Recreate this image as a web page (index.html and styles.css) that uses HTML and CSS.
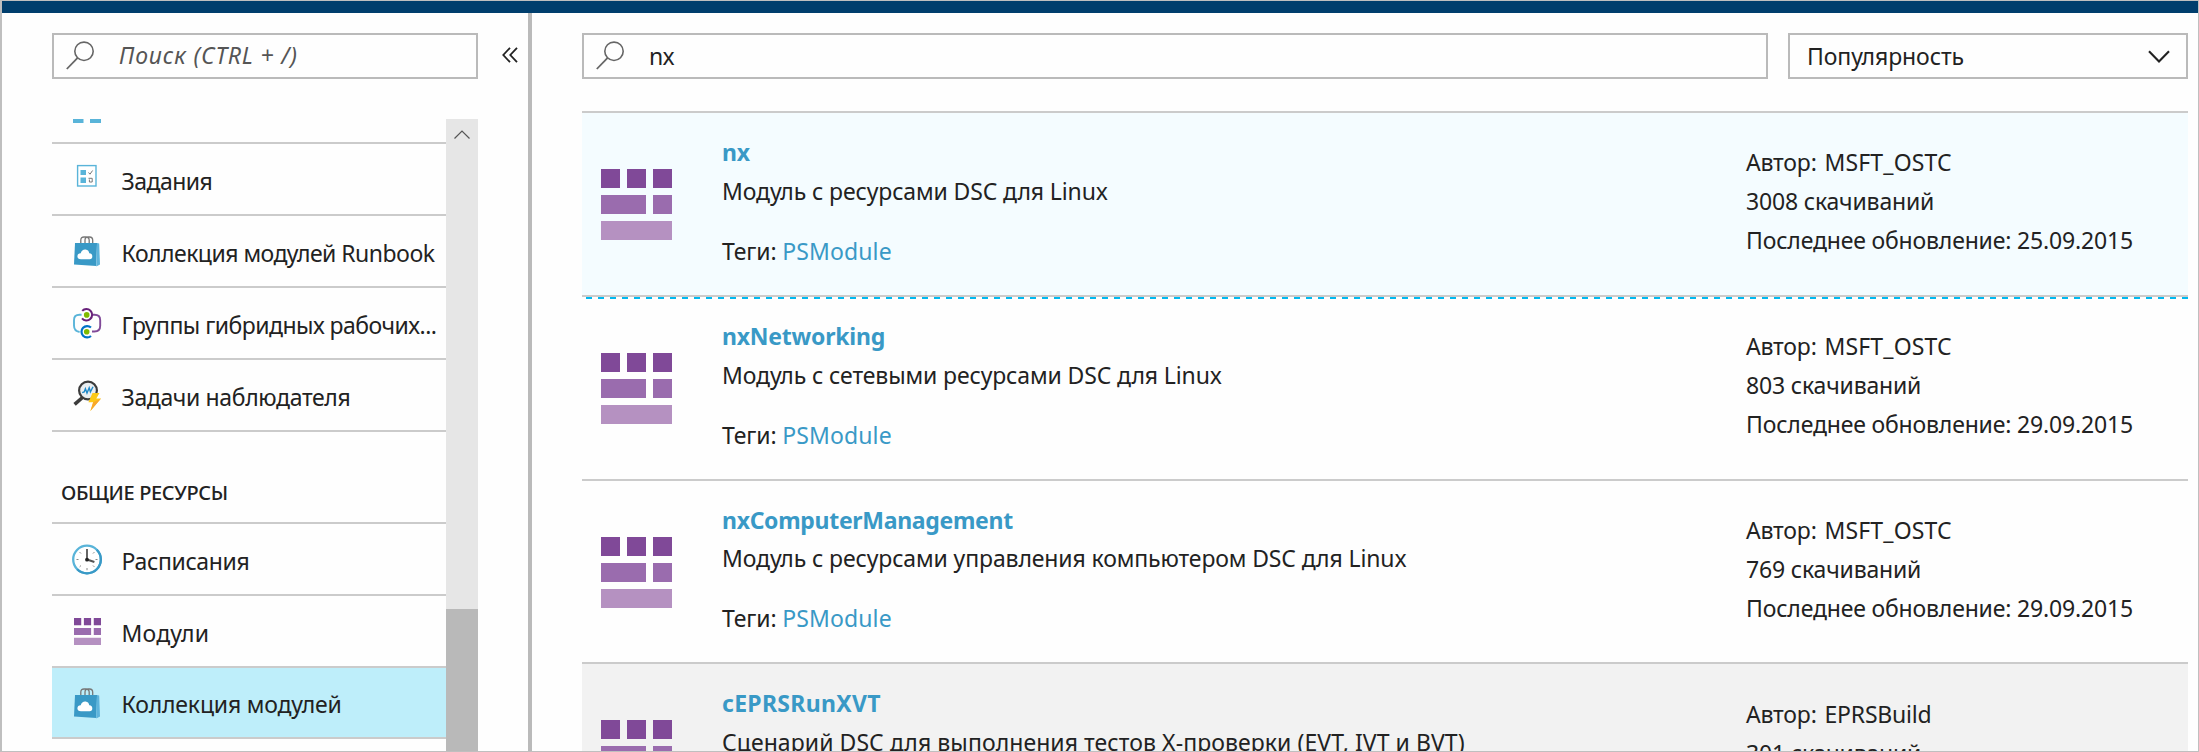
FILE: index.html
```
<!DOCTYPE html>
<html lang="ru">
<head>
<meta charset="utf-8">
<title>Коллекция модулей</title>
<link rel="stylesheet" href="styles.css">
</head>
<body>
<svg class="defs" width="0" height="0" aria-hidden="true">
  <symbol id="lens" viewBox="0 0 28 29">
    <circle cx="18" cy="10.3" r="9.2" fill="none" stroke="#666" stroke-width="1.6"/>
    <path d="M11.6 16.8 L0.8 28" fill="none" stroke="#666" stroke-width="1.8"/>
  </symbol>
  <symbol id="modules" viewBox="0 0 71 71">
    <path d="M0 0H19V19H0zM26 0H45V19H26zM52 0H71V19H52z" fill="#804998"/>
    <path d="M0 26H45V45H0zM52 26H71V45H52z" fill="#9a6cae"/>
    <path d="M0 52H71V71H0z" fill="#b591c1"/>
  </symbol>
  <symbol id="bag" viewBox="0 0 26 31">
    <path d="M6.8 8V4.2Q6.8 1 10 1H12Q15.2 1 15.2 4.2V8M11 8V4.2Q11 1 14 1H15.6Q18.7 1 18.7 4.2V8" fill="none" stroke="#777" stroke-width="1.3"/>
    <path d="M1 7H23L22.3 30L0 28.6z" fill="#3999c6"/>
    <path d="M23 7L25.2 7.4L26 28.4L22.3 30.4z" fill="#5eb4dc"/>
    <path d="M7 23.3Q3.4 23 3.4 20.2Q3.6 17.3 6.7 17.2Q8 13.2 11.7 13.6Q14.6 14 15.3 17.2Q18.4 17.4 18.3 20.5Q18.3 23.3 15.6 23.3z" fill="#fff"/>
  </symbol>
</svg>
<div class="window">
  <header class="topbar"></header>
  <div class="body">
    <aside class="sidebar">
      <div class="side-head">
        <div class="field"><svg class="lens"><use href="#lens"/></svg><span class="placeholder">Поиск (CTRL + /)</span></div>
        <svg class="collapse" viewBox="0 0 16 16"><path d="M8 .8L1.3 8L8 15.2M15 .8L8.3 8L15 15.2" fill="none" stroke="#222" stroke-width="1.8"/></svg>
      </div>
      <div class="side-list">
        <nav class="menu">
          <div class="item cut"><svg class="icon" viewBox="0 0 30 4"><path d="M1 0H11.5V4H1zM18 0H29V4H18z" fill="#59b4d9"/></svg></div>
          <div class="item"><svg class="icon jobs" viewBox="0 0 30 31">
            <rect x="5.6" y="4.6" width="18.4" height="20.4" fill="#fff" stroke="#59b4d9" stroke-width="1.4"/>
            <path d="M8.5 9H14V14H8.5zM8.5 16.5H14V22H8.5z" fill="#59b4d9"/>
            <path d="M16.5 11.5L18 13.2L20.6 9.5M16.5 17.3H20.2V21H17.4V18.5" fill="none" stroke="#777" stroke-width="1"/></svg><span class="t1">Задания</span></div>
          <div class="item"><svg class="icon bag"><use href="#bag"/></svg><span class="t1">Коллекция модулей Runbook</span></div>
          <div class="item"><svg class="icon" viewBox="0 0 30 31">
            <path d="M9.6 6.8H7.5Q2 6.8 2 12.2V17.5Q2 23 7.6 24" fill="none" stroke="#59b4d9" stroke-width="1.9"/>
            <path d="M20.2 6.8H22.5Q28.2 6.8 28.2 12.2V17.8Q28.2 23.5 22.5 23.5H20" fill="none" stroke="#804998" stroke-width="1.9"/>
            <path d="M10.2 2.9A5.7 5.7 0 1 1 10 10.3" fill="none" stroke="#68217a" stroke-width="2"/>
            <path d="M19 19.5A5.7 5.7 0 1 0 19 28" fill="none" stroke="#0072c6" stroke-width="2.2"/>
            <circle cx="14.7" cy="6.9" r="2.8" fill="#7fba00"/><circle cx="14.7" cy="23.7" r="2.8" fill="#7fba00"/></svg><span class="t1">Группы гибридных рабочих...</span></div>
          <div class="item"><svg class="icon" viewBox="0 0 30 31">
            <path d="M10.5 17.5L2.6 24.4" stroke="#3c3c3c" stroke-width="3.6"/>
            <circle cx="16" cy="10.5" r="8.9" fill="#e9eef1" stroke="#3c3c3c" stroke-width="2.2"/>
            <path d="M10.2 12.6L12.2 12L13.4 8.8L15 13L17.2 7.8L18.4 11.8L21 6.8" fill="none" stroke="#1e88c8" stroke-width="1.4"/>
            <path d="M20.5 13H27.5L24.3 18.5H29L18.4 31L21.2 22.3H16.4z" fill="#fcc917"/>
            <path d="M29 18.5L18.4 31L21.2 22.3z" fill="#f8a72b"/></svg><span class="t2">Задачи наблюдателя</span></div>
          <div class="section">ОБЩИЕ РЕСУРСЫ</div>
          <div class="item"><svg class="icon" viewBox="0 0 30 31">
            <circle cx="15" cy="15.5" r="13.8" fill="#fff" stroke="#59b4d9" stroke-width="2.3"/>
            <path d="M24.8 5.7A13.8 13.8 0 0 1 5.2 25.3" fill="none" stroke="#3999c6" stroke-width="2.3"/>
            <path d="M4.5 15.5H6.5M23.5 15.5H25.5M15 24V26.2M7.6 8.1L9 9.5M22.4 8.1L21 9.5M7.6 22.9L9 21.5M22.4 22.9L21 21.5" stroke="#888" stroke-width="1"/>
            <path d="M15 5V15.5" stroke="#555" stroke-width="1.8"/><path d="M15 15.5L22.4 18" stroke="#555" stroke-width="2"/>
            <circle cx="15" cy="15.7" r="1.9" fill="#222"/></svg><span class="t2">Расписания</span></div>
          <div class="item"><svg class="icon mods"><use href="#modules"/></svg><span class="t4">Модули</span></div>
          <div class="item selected"><svg class="icon bag"><use href="#bag"/></svg><span class="t3">Коллекция модулей</span></div>
        </nav>
        <div class="scroll"><svg class="up" viewBox="0 0 16 9"><path d="M.5 8.5L8 1L15.5 8.5" fill="none" stroke="#555" stroke-width="1.2"/></svg><div class="thumb"></div></div>
      </div>
    </aside>
    <main class="content">
      <div class="filters">
        <div class="field query"><svg class="lens"><use href="#lens"/></svg><span class="value">nx</span></div>
        <div class="field select"><span>Популярность</span><svg class="chev" viewBox="0 0 22 13"><path d="M1 1.2L11 11.5L21 1.2" fill="none" stroke="#222" stroke-width="2.1"/></svg></div>
      </div>
      <section class="results">
        <article class="row active">
          <svg class="big"><use href="#modules"/></svg>
          <div class="info"><h3>nx</h3><p>Модуль с ресурсами DSC для Linux</p><p class="tags">Теги: <a>PSModule</a></p></div>
          <div class="meta"><p>Автор: <span class="author">MSFT_OSTC</span></p><p>3008 скачиваний</p><p>Последнее обновление: 25.09.2015</p></div>
        </article>
        <article class="row">
          <svg class="big"><use href="#modules"/></svg>
          <div class="info"><h3>nxNetworking</h3><p>Модуль с сетевыми ресурсами DSC для Linux</p><p class="tags">Теги: <a>PSModule</a></p></div>
          <div class="meta"><p>Автор: <span class="author">MSFT_OSTC</span></p><p>803 скачиваний</p><p>Последнее обновление: 29.09.2015</p></div>
        </article>
        <article class="row">
          <svg class="big"><use href="#modules"/></svg>
          <div class="info"><h3 class="tight">nxComputerManagement</h3><p>Модуль с ресурсами управления компьютером DSC для Linux</p><p class="tags">Теги: <a>PSModule</a></p></div>
          <div class="meta"><p>Автор: <span class="author">MSFT_OSTC</span></p><p>769 скачиваний</p><p>Последнее обновление: 29.09.2015</p></div>
        </article>
        <article class="row muted">
          <svg class="big"><use href="#modules"/></svg>
          <div class="info"><h3 class="wide">cEPRSRunXVT</h3><p class="wide-p">Сценарий DSC для выполнения тестов X-проверки (EVT, IVT и BVT)</p></div>
          <div class="meta"><p>Автор: <span class="author-b">EPRSBuild</span></p><p>301 скачиваний</p></div>
        </article>
      </section>
    </main>
  </div>
</div>
</body>
</html>
```
FILE: styles.css
```
* { box-sizing: border-box; }
body { margin: 0; background: #fefefe; color: #222; font: 23px/39px "Noto Sans", "Open Sans", sans-serif; }
h3, p { margin: 0; font-size: inherit; white-space: nowrap; }
.defs { display: block; }
.window { width: 2199px; height: 752px; display: flex; flex-direction: column; overflow: hidden; border: 1px solid #bfbfbf; border-left-width: 2px; }
.topbar { height: 12px; flex: none; background: #003e6d; }
.body { flex: 1; min-height: 0; display: flex; }

.field { height: 46px; border: 2px solid #bababa; display: flex; align-items: center; background: #fefefe; }
.lens { width: 28px; height: 29px; margin: -2px 0 0 12px; flex: none; }

.sidebar { width: 530px; flex: none; border-right: 4px solid #bababa; padding: 20px 0 0 50px; display: flex; flex-direction: column; }
.side-head { display: flex; align-items: center; flex: none; }
.side-head .field { width: 426px; }
.placeholder { margin: -1px 0 0 25px; font-style: italic; letter-spacing: .85px; color: #555; }
.collapse { width: 16px; height: 16px; margin: -2px 0 0 24px; }
.side-list { margin-top: 40px; flex: 1; min-height: 0; width: 426px; display: flex; }
.menu { flex: 1; min-width: 0; overflow: hidden; }
.item { height: 72px; border-bottom: 2px solid #cbcbcb; display: flex; align-items: center; padding-left: 20px; white-space: nowrap; }
.item span { margin: 5px 0 0 19.5px; }
.icon { width: 30px; height: 31px; flex: none; margin-top: 1px; }
.icon.jobs { margin-top: -6px; }
.icon.bag { width: 26px; margin: 1px 2px 0 2px; }
.icon.mods { width: 27px; height: 27px; margin: 1px 1.5px 0 1.5px; }
.cut { height: 25px; align-items: flex-start; }
.cut .icon { height: 4px; margin-top: 0; }
.t1 { letter-spacing: -.52px; }
.t2 { letter-spacing: -.36px; }
.t3 { letter-spacing: -.18px; }
.t4 { letter-spacing: .2px; }
.section { height: 92px; border-bottom: 2px solid #cbcbcb; padding: 41px 0 0 9px; font-size: 20px; font-weight: 500; letter-spacing: -.35px; }
.selected { height: 71px; background: #beeefa; }
.selected span { margin-top: 4px; }
.scroll { width: 32px; flex: none; background: #e6e6e6; display: flex; flex-direction: column; justify-content: space-between; align-items: center; }
.up { width: 16px; height: 9px; margin-top: 11px; }
.thumb { width: 32px; height: 142px; background: #b9b9b9; }

.content { flex: 1; min-width: 0; padding: 20px 10px 0 50px; display: flex; flex-direction: column; }
.filters { display: flex; gap: 20px; flex: none; }
.query { flex: 1; }
.value { margin: 0 0 0 25px; letter-spacing: -.6px; }
.select { width: 400px; justify-content: space-between; padding: 0 16px 0 17px; letter-spacing: -.1px; }
.chev { width: 22px; height: 13px; }
.results { margin-top: 32px; flex: 1; min-height: 0; overflow: hidden; letter-spacing: -.12px; }
.row { height: 184px; border-top: 2px solid #cbcbcb; display: flex; position: relative; }
.row:nth-child(3) { height: 183px; }
.big { width: 71px; height: 71px; margin: 55.5px 0 0 18.5px; flex: none; }
.info { flex: 1; padding: 20px 0 0 50.5px; }
.info h3 { color: #3999c6; font-weight: 700; letter-spacing: -.22px; }
.info .tight { letter-spacing: -.3px; margin-bottom: -1px; }
.info .wide { letter-spacing: .3px; }
.info .wide-p { letter-spacing: .07px; }
.tags { margin-top: 21px; }
.tags a { color: #3999c6; letter-spacing: .1px; }
.meta { width: 442px; flex: none; padding-top: 30px; letter-spacing: -.17px; }
.author { margin-left: 2px; letter-spacing: .15px; }
.author-b { margin-left: 2px; letter-spacing: -.2px; }
.active { background: #f4fcff; }
.active::after { content: ""; position: absolute; left: 4px; right: 0; bottom: -4px; height: 2px; background: repeating-linear-gradient(90deg, #00b9f0 0 6px, transparent 6px 12px); z-index: 1; }
.muted { background: #f2f2f2; }
.muted .meta { padding-top: 31px; }
```
